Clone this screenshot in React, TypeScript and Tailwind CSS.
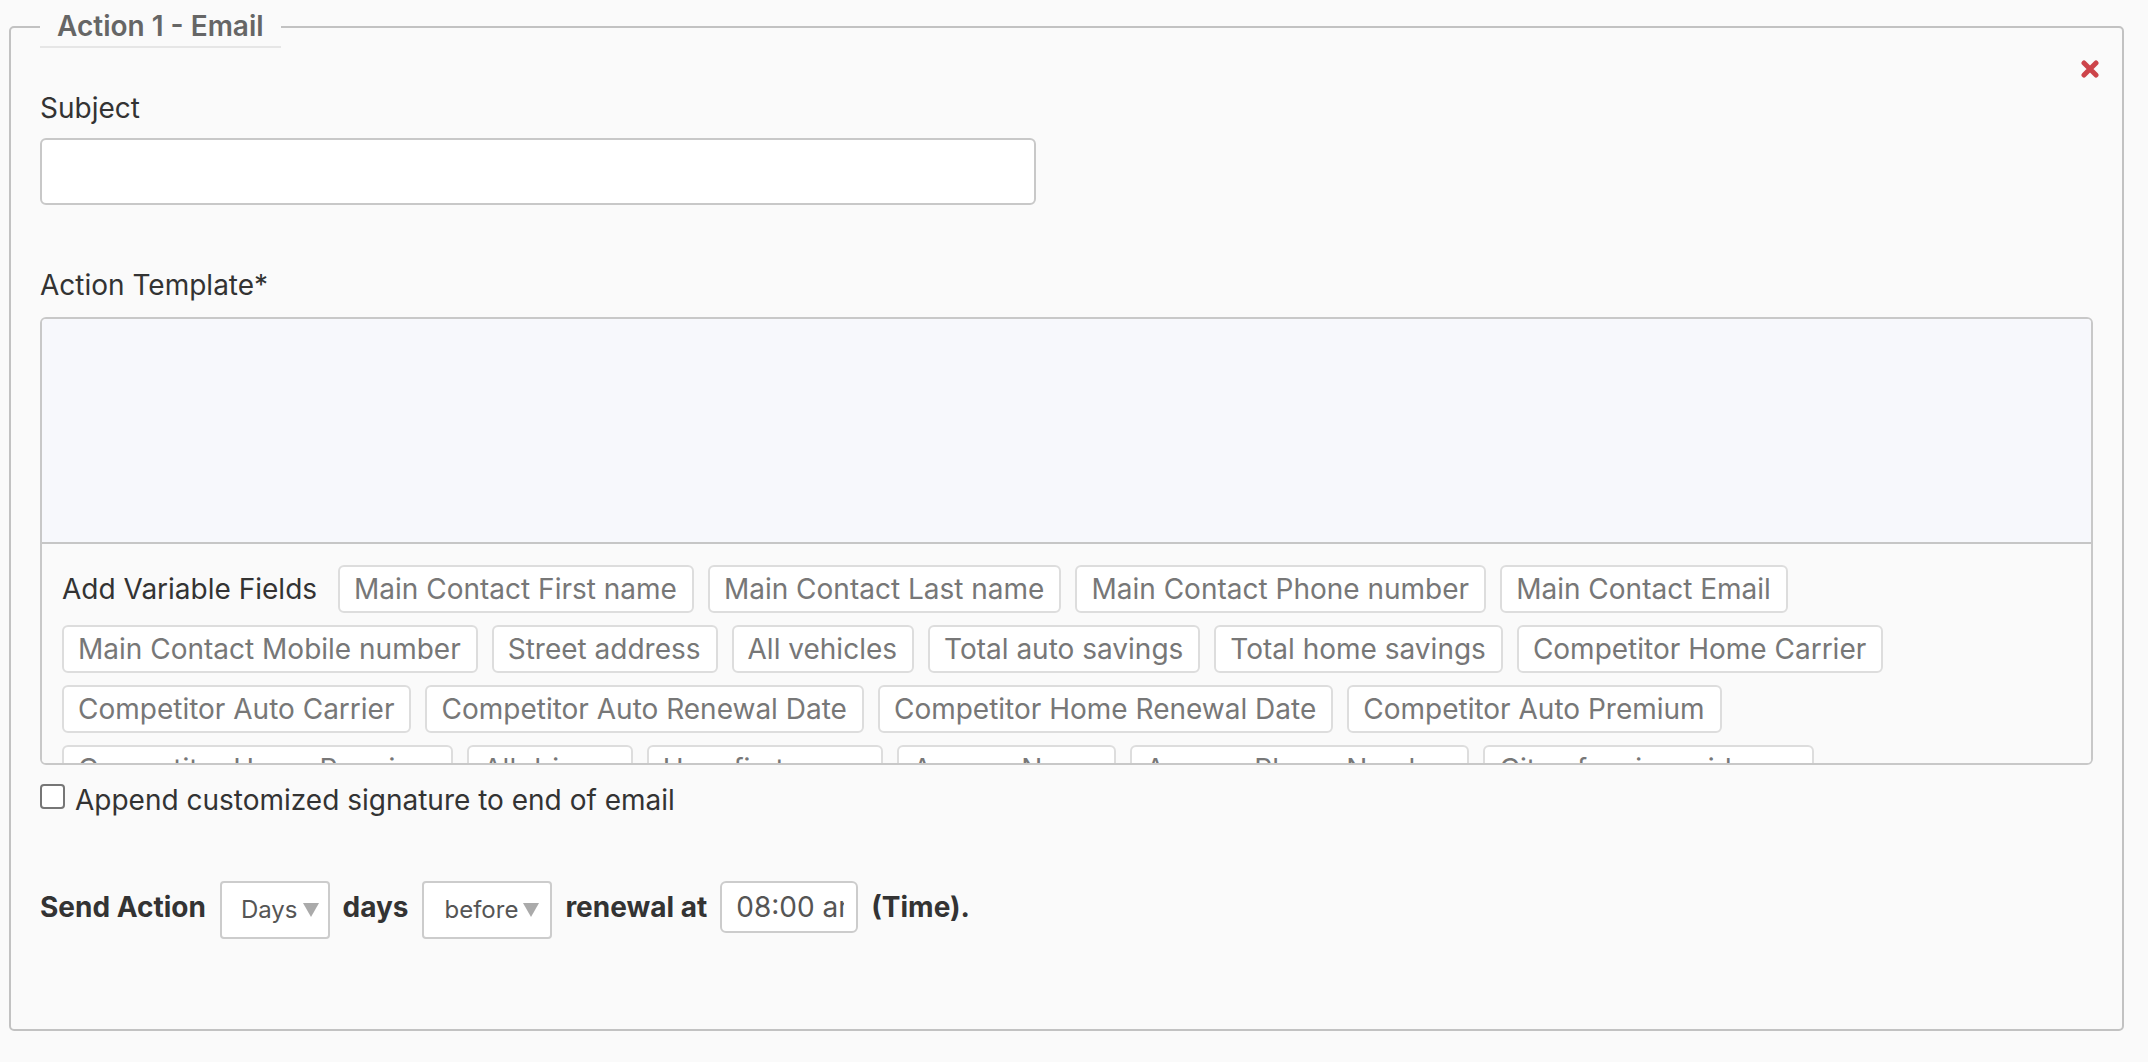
import React from "react";

const fields = [
  "Main Contact First name",
  "Main Contact Last name",
  "Main Contact Phone number",
  "Main Contact Email",
  "Main Contact Mobile number",
  "Street address",
  "All vehicles",
  "Total auto savings",
  "Total home savings",
  "Competitor Home Carrier",
  "Competitor Auto Carrier",
  "Competitor Auto Renewal Date",
  "Competitor Home Renewal Date",
  "Competitor Auto Premium",
  "Competitor Home Premium",
  "All drivers",
  "User first name",
  "Agency Name",
  "Agency Phone Number",
  "City of main residence",
];

function Caret() {
  return (
    <svg width="16" height="14" viewBox="0 0 16 14" className="shrink-0">
      <path d="M0 0 H16 L8 14 Z" fill="#aaaaaa" />
    </svg>
  );
}

function FakeSelect({ label, pad }: { label: string; pad: string }) {
  return (
    <div
      className={`h-[58px] border-2 border-[#cccccc] rounded-[4px] bg-white flex items-center ${pad}`}
    >
      <span className="text-[24px] leading-[30px] text-[#555555]">{label}</span>
      <span className="ml-[5px] flex items-center">
        <Caret />
      </span>
    </div>
  );
}

export default function App() {
  return (
    <div className="min-h-screen bg-[#fafafa] pl-[9px] pr-[24px] pt-[6px] pb-[31px] font-['Inter',sans-serif] text-[#333333]">
      <fieldset className="border-2 border-[#c2c2c2] rounded-[5px] px-[29px] pt-[12px] pb-[90px] bg-[#fafafa]">
        <legend className="text-[28px] leading-[40px] font-semibold text-[#666666] px-[17px] border-b-2 border-[#e6e6e6]">
          Action 1 - Email
        </legend>

        <div className="flex justify-end h-[18px] -mr-[6px]">
          <svg width="18" height="18" viewBox="0 0 18 18">
            <path
              d="M3 3 L15 15 M15 3 L3 15"
              stroke="#cd444a"
              strokeWidth="5"
              strokeLinecap="round"
            />
          </svg>
        </div>

        <div className="mt-[9.5px] text-[28px] leading-[41px] text-[#333333]">Subject</div>
        <input
          type="text"
          className="mt-[9.5px] block w-[996px] h-[67px] border-2 border-[#c8c8c8] rounded-[6px] bg-white px-[14px] text-[28px] outline-none"
        />

        <div className="mt-[59.5px] text-[28px] leading-[41px] text-[#333333]">Action Template*</div>
        <div className="mt-[11.5px] h-[448px] border-2 border-[#c8c8c8] rounded-[6px] overflow-hidden flex flex-col">
          <div className="h-[225px] shrink-0 bg-[#f7f8fc] border-b-2 border-[#c6c6c6]" />
          <div className="flex-1 overflow-hidden bg-[#fafafa] pt-[21px] px-[20px]">
            <div className="flex flex-wrap items-center gap-x-[14px] gap-y-[12px]">
              <span className="text-[28px] leading-[48px] text-[#333333] mr-[7px]">
                Add Variable Fields
              </span>
              {fields.map((f) => (
                <span
                  key={f}
                  className="h-[48px] flex items-center border-2 border-[#dddddd] rounded-[6px] bg-white pl-[14px] pr-[15px] text-[28px] text-[#777777] whitespace-nowrap"
                >
                  {f}
                </span>
              ))}
            </div>
          </div>
        </div>

        <div className="mt-[14.5px] flex items-start">
          <input
            type="checkbox"
            className="appearance-none mt-[4.5px] w-[25px] h-[25px] border-2 border-[#767676] rounded-[4px] bg-white shrink-0"
          />
          <span className="ml-[10px] text-[28px] leading-[41px] text-[#333333]">
            Append customized signature to end of email
          </span>
        </div>

        <div className="mt-[60.5px] flex items-start gap-[13px]">
          <span className="mt-[6px] text-[28px] leading-[41px] font-bold text-[#333333] mr-[1px]">Send Action</span>
          <FakeSelect label="Days" pad="pl-[19px] pr-[9px]" />
          <span className="mt-[6px] text-[28px] leading-[41px] font-bold text-[#333333]">days</span>
          <FakeSelect label="before" pad="pl-[21px] pr-[11px]" />
          <span className="mt-[6px] text-[28px] leading-[41px] font-bold text-[#333333]">renewal at</span>
          <input
            type="text"
            readOnly
            value="08:00 am"
            className="w-[138px] h-[52px] border-2 border-[#cccccc] rounded-[6px] bg-white pl-[14px] pr-[12px] text-[28px] text-[#555555] outline-none"
          />
          <span className="mt-[6px] text-[28px] leading-[41px] font-bold text-[#333333]">(Time).</span>
        </div>
      </fieldset>
    </div>
  );
}
